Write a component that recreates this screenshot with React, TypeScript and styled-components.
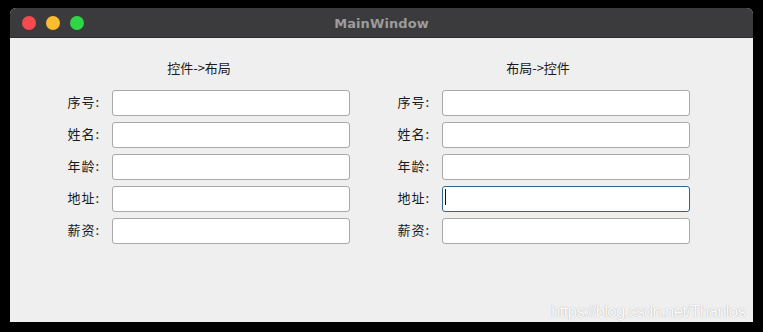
import React from "react";
import styled, { createGlobalStyle } from "styled-components";

const Global = createGlobalStyle`
  html, body { margin: 0; padding: 0; background: #000; }
  body { width: 763px; height: 332px; overflow: hidden; font-family: "Noto Sans CJK SC", "Noto Sans", sans-serif; }
`;

const Window = styled.div`
  position: relative;
  margin: 8px 0 0 10px;
  width: 743px;
  height: 314px;
  display: flex;
  flex-direction: column;
  border-radius: 6px 6px 0 0;
  overflow: hidden;
  background: #efefef;
`;

const TitleBar = styled.div`
  height: 30px;
  flex: none;
  display: grid;
  grid-template-columns: 1fr auto 1fr;
  align-items: center;
  background: #3b3b3d;
  border-bottom: 1px solid #2e2e30;
  box-sizing: border-box;
`;

const Lights = styled.div`
  display: flex;
  gap: 10px;
  padding-left: 12px;
  padding-top: 1px;
`;

const Light = styled.span<{ $color: string }>`
  width: 14px;
  height: 14px;
  border-radius: 50%;
  background: ${(p) => p.$color};
`;

const Title = styled.div`
  font-family: "DejaVu Sans", sans-serif;
  font-weight: bold;
  font-size: 13px;
  color: #9c9c9c;
  letter-spacing: 0.1px;
  padding-top: 1px;
`;

const Content = styled.div`
  flex: 1;
  display: flex;
  gap: 36px;
  padding: 20px 0 0 38px;
`;

const Panel = styled.div<{ $width: number }>`
  width: ${(p) => p.$width}px;
  display: flex;
  flex-direction: column;
  gap: 10px;
`;

const Header = styled.div`
  height: 20px;
  line-height: 20px;
  text-align: center;
  font-size: 13px;
  color: #1a1a1a;
`;

const Form = styled.div<{ $labelWidth: number }>`
  display: grid;
  grid-template-columns: ${(p) => p.$labelWidth}px 1fr;
  column-gap: 12px;
  row-gap: 6px;
  align-items: center;
`;

const Label = styled.label`
  text-align: right;
  font-size: 13px;
  letter-spacing: 1px;
  color: #1a1a1a;
  white-space: nowrap;
  padding-top: 1px;
`;

const FieldWrap = styled.div`
  position: relative;
  height: 26px;
`;

const Field = styled.input<{ $focused?: boolean }>`
  box-sizing: border-box;
  width: 100%;
  height: 26px;
  margin: 0;
  padding: 0 4px;
  border: 1px solid ${(p) => (p.$focused ? "#2f6691" : "#a9a9a9")};
  border-radius: 3px;
  background: #fff;
  outline: none;
  caret-color: transparent;
  font-size: 12px;
`;

const Caret = styled.span`
  position: absolute;
  left: 3px;
  top: 5px;
  width: 1px;
  height: 16px;
  background: #111;
`;

const Watermark = styled.div`
  position: absolute;
  left: 541px;
  bottom: 0;
  font-family: "Liberation Sans", Arial, sans-serif;
  font-size: 17px;
  letter-spacing: -0.8px;
  color: #fbfbfb;
  text-shadow: 0 0 1px rgba(0, 0, 0, 0.35);
  white-space: nowrap;
  pointer-events: none;
`;

const labels = ["序号:", "姓名:", "年龄:", "地址:", "薪资:"];

type FormProps = { title: string; width: number; labelWidth: number; focusIndex?: number };

function FormPanel({ title, width, labelWidth, focusIndex }: FormProps) {
  return (
    <Panel $width={width}>
      <Header>{title}</Header>
      <Form $labelWidth={labelWidth}>
        {labels.map((l, i) => (
          <React.Fragment key={l}>
            <Label>{l}</Label>
            <FieldWrap>
              <Field readOnly $focused={i === focusIndex} />
              {i === focusIndex && <Caret />}
            </FieldWrap>
          </React.Fragment>
        ))}
      </Form>
    </Panel>
  );
}

export default function App() {
  return (
    <>
      <Global />
      <Window>
        <TitleBar>
          <Lights>
            <Light $color="#f64b4e" />
            <Light $color="#fdbc2f" />
            <Light $color="#2ed646" />
          </Lights>
          <Title>MainWindow</Title>
          <div />
        </TitleBar>
        <Content>
          <FormPanel title="控件->布局" width={302} labelWidth={52} />
          <FormPanel title="布局->控件" width={304} labelWidth={44} focusIndex={3} />
        </Content>
        <Watermark>https://blog.csdn.net/Thanlos</Watermark>
      </Window>
    </>
  );
}
